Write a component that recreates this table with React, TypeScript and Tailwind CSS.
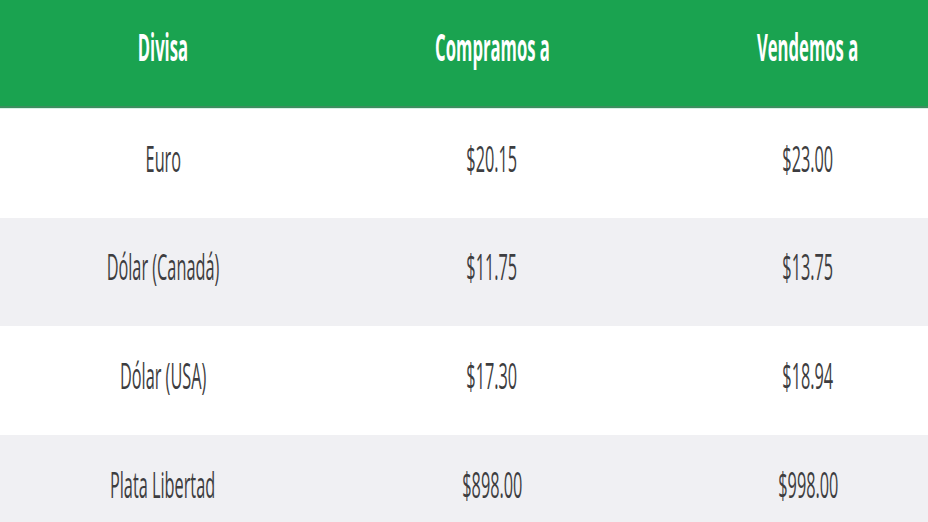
const rates = [
  { name: "Euro", buy: "$20.15", sell: "$23.00", h: "h-[109px]", bg: "bg-white" },
  { name: "Dólar (Canadá)", buy: "$11.75", sell: "$13.75", h: "h-[108px]", bg: "bg-[#f0f0f3]" },
  { name: "Dólar (USA)", buy: "$17.30", sell: "$18.94", h: "h-[109px]", bg: "bg-white" },
  { name: "Plata Libertad", buy: "$898.00", sell: "$998.00", h: "h-[109px]", bg: "bg-[#f0f0f3]" },
];

const cols = "grid grid-cols-[326px_332px_300px]";

function Cell({ children, bold }: { children: React.ReactNode; bold?: boolean }) {
  return (
    <div className="flex items-center justify-center pb-[12px]">
      <span
        className={
          bold
            ? "inline-block scale-x-[0.45] whitespace-nowrap text-[37px] font-bold text-white"
            : "inline-block scale-x-[0.44] whitespace-nowrap text-[37px] text-[#3d3d40]"
        }
      >
        {children}
      </span>
    </div>
  );
}

export default function App() {
  return (
    <div
      className="h-[522px] w-[928px] overflow-hidden bg-white"
      style={{ fontFamily: '"Open Sans", "Noto Sans", sans-serif' }}
    >
      {/* Header */}
      <div className={`${cols} h-[108px] border-b-2 border-[#3c8f5f] bg-[#1aa350]`}>
        <Cell bold>Divisa</Cell>
        <Cell bold>Compramos a</Cell>
        <Cell bold>Vendemos a</Cell>
      </div>
      <div className="h-px bg-[#d6f3e6]" />

      {rates.map((r) => (
        <div key={r.name} className={`${cols} ${r.h} ${r.bg}`}>
          <Cell>{r.name}</Cell>
          <Cell>{r.buy}</Cell>
          <Cell>{r.sell}</Cell>
        </div>
      ))}
    </div>
  );
}
